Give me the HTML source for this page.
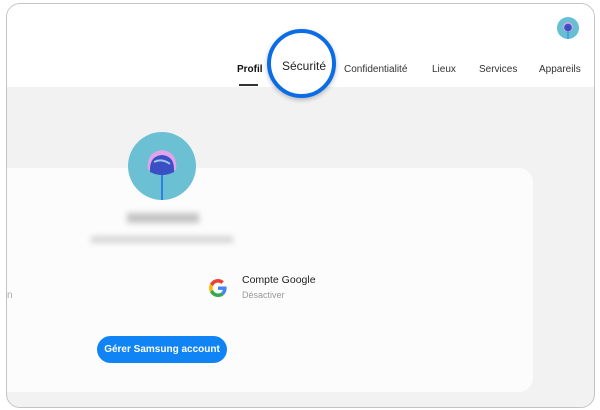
<!DOCTYPE html>
<html><head><meta charset="utf-8"><style>
*{margin:0;padding:0;box-sizing:border-box}
body{width:600px;height:410px;background:#fff;font-family:"Liberation Sans",sans-serif;position:relative;overflow:hidden}
.frame{position:absolute;left:6px;top:3px;width:589px;height:405px;border:1.5px solid #c4c4c4;border-radius:14px;overflow:hidden;background:#f2f2f2}
.hdr{position:absolute;left:0;top:0;right:0;height:83px;background:#fff}
.nav{position:absolute;top:60px;font-size:10px;color:#333}
.card{position:absolute;left:-20px;top:164px;width:546px;height:224px;background:#fcfcfc;border-radius:0 14px 14px 0}
.blur{position:absolute;filter:blur(3px);background:#bbb}
</style></head><body>
<div class="frame">
 <div class="hdr">
  <div class="nav" style="left:230px;font-weight:bold;color:#111">Profil</div>
  <div style="position:absolute;left:232px;top:80px;width:19px;height:2px;background:#333"></div>
  <div class="nav" style="left:337px">Confidentialité</div>
  <div class="nav" style="left:425px">Lieux</div>
  <div class="nav" style="left:472px">Services</div>
  <div class="nav" style="left:532px">Appareils</div>
  <svg style="position:absolute;left:550px;top:13px" width="22" height="22" viewBox="0 0 22 22"><circle cx="11" cy="11" r="11" fill="#66bfd3"/><circle cx="11" cy="10" r="5" fill="#d79fe8"/><circle cx="11" cy="10.5" r="3.8" fill="#3a4fc0"/><rect x="10.5" y="14" width="1" height="8" fill="#2a7fe0"/></svg>
 </div>
 <div class="card"></div>
 <svg style="position:absolute;left:121px;top:128px" width="68" height="68" viewBox="0 0 68 68"><circle cx="34" cy="34" r="34" fill="#6bc0d4"/><rect x="33" y="40" width="2" height="28" fill="#2d7fe0"/><path d="M20 38 Q18 20 34 18 Q50 20 48 38 Z" fill="#e3a2ea"/><path d="M22 40 Q21 24 34 23 Q47 24 46 40 Q34 46 22 40Z" fill="#3b4fc4"/><path d="M26 30 Q34 26 42 32" stroke="#9fc6f0" stroke-width="2" fill="none"/></svg>
 <div class="blur" style="left:120px;top:209px;width:72px;height:10px;background:#c4c4c4"></div>
 <div class="blur" style="left:84px;top:232px;width:142px;height:7px;background:#d6d6d6"></div>
 <div style="position:absolute;left:0;top:286px;font-size:10px;color:#aaa">n</div>
 <svg style="position:absolute;left:202px;top:275px" width="18" height="18" viewBox="0 0 48 48"><path fill="#EA4335" d="M24 9.5c3.5 0 6.6 1.2 9 3.5l6.7-6.7C35.6 2.4 30.2 0 24 0 14.6 0 6.6 5.4 2.7 13.2l7.8 6C12.4 13.7 17.7 9.5 24 9.5z"/><path fill="#4285F4" d="M46.9 24.5c0-1.6-.1-3.1-.4-4.5H24v9h12.9c-.6 3-2.300 5.500-4.800 7.200l7.600 5.900c4.400-4.100 7.200-10.200 7.200-17.600z"/><path fill="#FBBC05" d="M10.5 28.8c-.5-1.5-.8-3.1-.8-4.8s.3-3.3.8-4.8l-7.8-6C1 16.5 0 20.1 0 24s1 7.5 2.7 10.8z"/><path fill="#34A853" d="M24 48c6.5 0 11.9-2.1 15.8-5.8l-7.6-5.9c-2.1 1.4-4.9 2.3-8.2 2.3-6.3 0-11.6-4.2-13.5-9.9l-7.8 6C6.6 42.6 14.6 48 24 48z"/></svg>
 <div style="position:absolute;left:235px;top:270px;font-size:10.5px;color:#222">Compte Google</div>
 <div style="position:absolute;left:235px;top:286px;font-size:9px;color:#999">Désactiver</div>
 <div style="position:absolute;left:90px;top:332px;width:130px;height:27px;border-radius:14px;background:#1184f5;color:#fff;font-size:10px;font-weight:bold;text-align:center;line-height:27px">Gérer Samsung account</div>
</div>
<div style="position:absolute;left:267px;top:29px;width:69px;height:69px;border-radius:50%;border:4px solid #0a6de6;background:#fff;box-shadow:0 2px 5px rgba(0,0,0,.25)"></div>
<div style="position:absolute;left:282px;top:59px;font-size:12px;color:#222">Sécurité</div>
</body></html>
